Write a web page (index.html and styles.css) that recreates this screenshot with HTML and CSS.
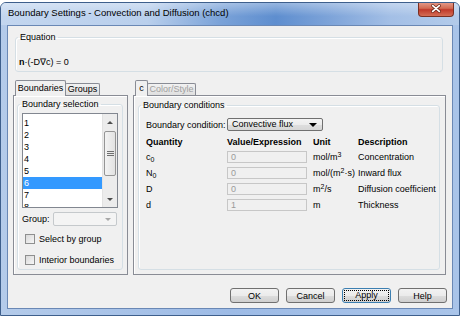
FILE: index.html
```html
<!DOCTYPE html>
<html lang="en">
<head>
    <meta charset="UTF-8">
    <title>Boundary Settings</title>
    <link rel="stylesheet" href="styles.css">
</head>
<body>
<div class="window">
    <div class="titlebar">
        <span class="title">Boundary Settings - Convection and Diffusion (chcd)</span>
        <span class="close">
            <svg width="36" height="15" viewBox="0 0 36 15">
                <path d="M14.5 4.5l7 6M21.5 4.5l-7 6" stroke="#6e2a1c" stroke-width="3.4" stroke-linecap="round"/>
                <path d="M14.5 4.5l7 6M21.5 4.5l-7 6" stroke="#fff" stroke-width="1.8" stroke-linecap="round"/>
            </svg>
        </span>
    </div>

    <div class="client">
        <fieldset class="group eq">
            <legend>Equation</legend>
            <div class="eq-text"><b>n</b>·(-D∇c) = 0</div>
        </fieldset>

        <div class="tabs-row">
            <div class="tabbox left">
                <div class="tabstrip">
                    <div class="tab active w-bnd">Boundaries</div>
                    <div class="tab w-grp">Groups</div>
                </div>
                <div class="panel">
                    <fieldset class="group sel">
                        <legend>Boundary selection</legend>
                        <div class="listbox">
                            <ul class="items">
                                <li>1</li>
                                <li>2</li>
                                <li>3</li>
                                <li>4</li>
                                <li>5</li>
                                <li class="selected">6</li>
                                <li>7</li>
                                <li>8</li>
                            </ul>
                            <div class="vscroll">
                                <span class="sbtn"><span class="arrow up"></span></span>
                                <span class="thumb">
                                    <svg width="7" height="5" viewBox="0 0 7 5"><path d="M0 .5h7M0 2.5h7M0 4.5h7" stroke="#6f6f6f" stroke-width="1"/></svg>
                                </span>
                                <span class="track"></span>
                                <span class="sbtn"><span class="arrow down"></span></span>
                            </div>
                        </div>
                        <div class="group-row">
                            <span class="lbl">Group:</span>
                            <div class="combo off"><span class="caret"></span></div>
                        </div>
                        <div class="check"><span class="box"></span>Select by group</div>
                        <div class="check"><span class="box"></span>Interior boundaries</div>
                    </fieldset>
                </div>
            </div>

            <div class="tabbox right">
                <div class="tabstrip">
                    <div class="tab active w-c">c</div>
                    <div class="tab disabled w-cs">Color/Style</div>
                </div>
                <div class="panel">
                    <fieldset class="group bc">
                        <legend>Boundary conditions</legend>
                        <div class="bc-body">
                            <div class="bc-row">
                                <span class="bc-lbl">Boundary condition:</span>
                                <div class="combo on">Convective flux<span class="caret"></span></div>
                            </div>
                            <div class="grid">
                                <b>Quantity</b><b>Value/Expression</b><b>Unit</b><b>Description</b>

                                <span>c<sub>0</sub></span>
                                <span class="field">0</span>
                                <span>mol/m<sup>3</sup></span>
                                <span>Concentration</span>

                                <span>N<sub>0</sub></span>
                                <span class="field">0</span>
                                <span>mol/(m<sup>2</sup>·s)</span>
                                <span>Inward flux</span>

                                <span>D</span>
                                <span class="field">0</span>
                                <span>m<sup>2</sup>/s</span>
                                <span>Diffusion coefficient</span>

                                <span>d</span>
                                <span class="field">1</span>
                                <span>m</span>
                                <span>Thickness</span>
                            </div>
                        </div>
                    </fieldset>
                </div>
            </div>
        </div>

        <div class="buttons">
            <button>OK</button>
            <button>Cancel</button>
            <button class="default"><span>Apply</span></button>
            <button>Help</button>
        </div>
    </div>
</div>
</body>
</html>
```

FILE: styles.css
```css
body { margin: 0; background: #fff; font-family: "Liberation Sans", Arial, sans-serif; font-size: 9px; color: #000; }

.window {
    width: 460px; height: 314px; margin-top: 2px; box-sizing: border-box;
    border: 1px solid #3e5f8c; border-radius: 6px 6px 0 0; overflow: hidden;
    padding: 0 6px 6px; display: flex; flex-direction: column;
    background: linear-gradient(90deg, #b4cbea, #9dbbe6 50%, #a9c4e9);
}

.titlebar {
    height: 22px; margin: 0 -6px; padding: 0 6px; display: flex; align-items: flex-start;
    background:
        linear-gradient(rgba(255,255,255,.35), rgba(255,255,255,0) 60%),
        linear-gradient(90deg, #c3d6ef 0%, #b9cfec 32%, #7aa2d8 48%, #5e8ecf 60%, #7ea4d9 72%, #a3bfe6 85%, #b3cbea 100%);
}
.title { font-size: 9.5px; line-height: 12px; padding: 4px 0 0 1px; }
.close {
    margin: -1px -1px 0 auto; width: 36px; height: 15px; box-sizing: border-box;
    border: 1px solid #7a2f22; border-top: none; border-radius: 0 0 4px 4px;
    background: linear-gradient(#e6a090, #d26a52 45%, #c0392a 55%, #d46d55);
    display: flex; align-items: center; justify-content: center;
}
.close svg { display: block; margin-top: -1px; }

.client {
    flex: 1; background: #f0f0f0; border: 1px solid #6a88b5;
    display: flex; flex-direction: column;
}

/* group boxes */
.group {
    margin: 0; padding: 0 4px 0 2px; min-width: 0;
    border: 1px solid #d5dfe5; border-radius: 3px; box-shadow: inset 1px 1px 0 #fff;
}
.group legend { padding: 0 2px; line-height: 11px; }

.eq { margin: 6px 9px 0 7px; padding: 14px 0 3px 2px; }
.eq-text { line-height: 11px; padding-left: 1px; }

/* tabs */
.tabs-row { display: flex; gap: 5px; margin-top: 8px; padding-left: 5px; }
.tabbox { display: flex; flex-direction: column; }
.tabbox.left { width: 115px; }
.tabbox.right { width: 313px; }
.tabstrip { height: 15px; display: flex; align-items: flex-end; padding-left: 2px; position: relative; z-index: 1; }
.tab {
    height: 12px; box-sizing: border-box; border: 1px solid #898c95; border-bottom: none;
    border-radius: 2px 2px 0 0; background: linear-gradient(#f2f2f2, #dfdfdf);
    line-height: 11px; text-align: center; margin-left: -1px;
}
.tab:first-child { margin-left: 0; }
.tab.active { height: 16px; margin-bottom: -1px; background: #f0f0f0; line-height: 14px; }
.tab.disabled { color: #a0a0a0; }
.w-bnd { width: 51px; }
.w-grp { width: 35px; }
.w-c { width: 13px; }
.w-cs { width: 49px; }

.panel {
    height: 180px; box-sizing: border-box; border: 1px solid #898c95; background: #f0f0f0;
    box-shadow: inset 1px 1px 0 #fff; display: flex; flex-direction: column;
}

/* left panel */
.sel { margin: 3px 4px 4px 3px; flex: 1; padding-bottom: 4px; }
.listbox { margin: 3px 0 0 2px; height: 95px; box-sizing: border-box; border: 1px solid #828790; background: #fff; display: flex; }
.items { list-style: none; margin: 0; padding: 3px 0 0; flex: 1; overflow: hidden; }
.items li { height: 12px; line-height: 12px; padding-left: 1px; }
.items li.selected { background: #3399ff; color: #fff; }
.vscroll { width: 14px; display: flex; flex-direction: column; align-items: center; background: #ececec; border-left: 1px solid #e2e2e2; }
.sbtn { height: 15px; width: 14px; display: flex; align-items: center; justify-content: center; }
.arrow { width: 0; height: 0; border-left: 3px solid transparent; border-right: 3px solid transparent; }
.arrow.up { border-bottom: 3px solid #4d4d4d; margin-top: 1px; }
.arrow.down { border-top: 3px solid #4d4d4d; }
.thumb {
    margin-top: 2px; width: 12px; height: 45px; box-sizing: border-box; border: 1px solid #959595; border-radius: 2px;
    background: linear-gradient(90deg, #f3f3f3, #e2e2e2); display: flex; align-items: center; justify-content: center;
}
.thumb svg { display: block; }
.track { flex: 1; }

.group-row { display: flex; align-items: center; margin: 4px 0 0 2px; }
.lbl { width: 31px; }
.combo { height: 14px; box-sizing: border-box; border-radius: 2px; position: relative; }
.combo.off { width: 64px; border: 1px solid #c5c9cc; background: #f4f4f4; }
.caret { position: absolute; right: 5px; top: 5px; width: 0; height: 0; border-left: 3px solid transparent; border-right: 3px solid transparent; border-top: 3px solid #a8a8a8; }

.check { display: flex; align-items: center; gap: 4px; height: 10px; line-height: 10px; margin: 8px 0 0 5px; }
.check + .check { margin-top: 11px; }
.box { width: 10px; height: 10px; box-sizing: border-box; border: 1px solid #8e8f8f; background: linear-gradient(135deg, #d9d9d9, #f6f6f6); }

/* right panel */
.bc { margin: 4px 5px 4px 4px; flex: 1; }
.bc-body { padding-left: 5px; }
.bc-row { display: flex; align-items: center; margin-top: 7px; }
.bc-lbl { width: 81px; }
.combo.on {
    width: 96px; height: 13px; border: 1px solid #707070; padding-left: 4px; line-height: 11px;
    background: linear-gradient(#f4f4f4, #ececec 50%, #dedede 51%, #d6d6d6);
}
.combo.on .caret { border-top-color: #000; right: 5px; top: 4px; border-left-width: 4px; border-right-width: 4px; border-top-width: 4px; }

.grid { display: grid; grid-template-columns: 81px 86px 45px auto; grid-auto-rows: 16px; grid-template-rows: 14px; margin-top: 4px; align-items: center; white-space: nowrap; }
.grid sub { font-size: 7px; vertical-align: -2px; line-height: 0; }
.grid sup { font-size: 7px; vertical-align: 3px; line-height: 0; }
.field {
    width: 80px; height: 12px; box-sizing: border-box; border: 1px solid #c7c7c7; background: #f0f0f0;
    color: #9a9a9a; line-height: 10px; padding-left: 3px;
}

/* buttons */
.buttons { display: flex; justify-content: flex-end; gap: 7px; margin-top: 13px; padding-right: 5px; }
.buttons button {
    width: 49px; height: 15px; padding: 0; font: inherit; color: #000;
    border: 1px solid #707070; border-radius: 3px;
    background: linear-gradient(#f2f2f2, #ebebeb 50%, #dddddd 51%, #cfcfcf);
}
.buttons button.default { border-color: #3c7fb1; padding: 1px; }
.buttons button.default span { display: block; height: 100%; box-sizing: border-box; border: 1px dotted #000; line-height: 9px; }
```
